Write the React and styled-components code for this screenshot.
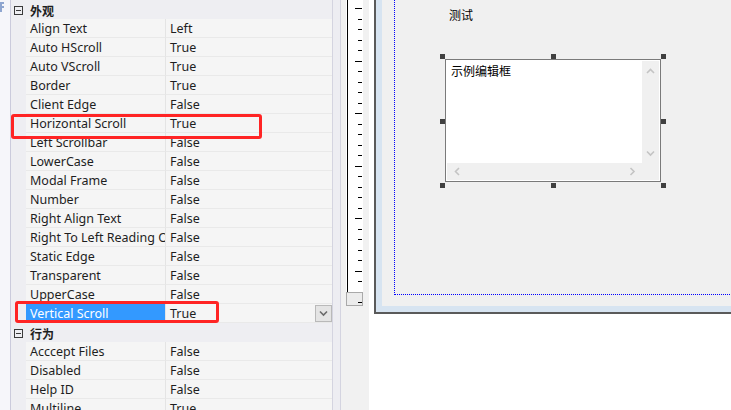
import React from 'react'
import styled, { createGlobalStyle } from 'styled-components'

const GlobalStyle = createGlobalStyle`
  html, body { margin: 0; padding: 0; background: #ffffff; }
  body { font-family: "Noto Sans", "Noto Sans CJK SC", sans-serif; }
`;

const sections = [
  {
    title: '外观',
    rows: [
      ['Align Text', 'Left'],
      ['Auto HScroll', 'True'],
      ['Auto VScroll', 'True'],
      ['Border', 'True'],
      ['Client Edge', 'False'],
      ['Horizontal Scroll', 'True'],
      ['Left Scrollbar', 'False'],
      ['LowerCase', 'False'],
      ['Modal Frame', 'False'],
      ['Number', 'False'],
      ['Right Align Text', 'False'],
      ['Right To Left Reading Order', 'False'],
      ['Static Edge', 'False'],
      ['Transparent', 'False'],
      ['UpperCase', 'False'],
      ['Vertical Scroll', 'True', true],
    ],
  },
  {
    title: '行为',
    rows: [
      ['Acccept Files', 'False'],
      ['Disabled', 'False'],
      ['Help ID', 'False'],
      ['Multiline', 'True'],
    ],
  },
];

// ruler ticks every ~10.5px, long one every 5th
const ticks = [];
for (let k = 0; 8 + k * 10.5 < 292; k++) {
  ticks.push({ y: Math.round(8 + k * 10.5) + 0.5, long: k % 5 === 0 });
}

const Chevron = ({ dir, color = '#c4c4c4' }) => {
  const pts = {
    up: '1,5 4.5,1.5 8,5',
    down: '1,1.5 4.5,5 8,1.5',
    left: '5,1 1.5,4.5 5,8',
    right: '1.5,1 5,4.5 1.5,8',
  }[dir];
  const vertical = dir === 'up' || dir === 'down';
  return (
    <svg width={vertical ? 9 : 7} height={vertical ? 7 : 9}>
      <polyline points={pts} fill="none" stroke={color} strokeWidth="1.6" />
    </svg>
  );
};

const App = () => {
  return (
    <Screen>
      <GlobalStyle />
      <PropertyPanel>
        <SideStrip>
          <svg width="4" height="13">
            <path d="M0 2 H4 V4 H2 V6 H4 V8 H2 V12 H0 Z" fill="#8fa6d0" />
          </svg>
        </SideStrip>
        <Grid>
          {sections.map((section) => (
            <React.Fragment key={section.title}>
              <HeaderRow>
                <ToggleBox />
                <HeaderTitle>{section.title}</HeaderTitle>
              </HeaderRow>
              {section.rows.map(([name, value, selected]) => (
                <Row key={name}>
                  <Gutter />
                  <NameCell selected={selected}>{name}</NameCell>
                  <ValueCell>
                    <span>{value}</span>
                    {selected && (
                      <DropButton>
                        <Chevron dir="down" color="#6a6a6a" />
                      </DropButton>
                    )}
                  </ValueCell>
                </Row>
              ))}
            </React.Fragment>
          ))}
        </Grid>
        <GridScroll />
        <Annotation style={{ left: 11, top: 114, width: 251, height: 25 }} />
        <Annotation style={{ left: 15, top: 301, width: 204, height: 22 }} />
      </PropertyPanel>

      <RulerColumn>
        <svg width="17" height="306">
          <rect x="0" y="0" width="17" height="292" fill="#ffffff" />
          <line x1="1.5" y1="0" x2="1.5" y2="292" stroke="#000" strokeWidth="1" />
          {ticks.map((t) => (
            <line key={t.y} x1={t.long ? 9 : 12} y1={t.y} x2="16" y2={t.y} stroke="#000" strokeWidth="1" />
          ))}
          <rect x="0.5" y="292.5" width="16" height="13" fill="#ececec" stroke="#a9a9a9" />
          <line x1="12" y1="302.5" x2="16" y2="302.5" stroke="#000" strokeWidth="1" />
        </svg>
      </RulerColumn>

      <Canvas>
        <Form>
          <Client>
            <Guide />
            <Label>测试</Label>
            <EditBox>
              <EditText>示例编辑框</EditText>
              <VScroll>
                <Chevron dir="up" />
                <Chevron dir="down" />
              </VScroll>
              <HScroll>
                <Chevron dir="left" />
                <Chevron dir="right" />
              </HScroll>
              <Corner />
            </EditBox>
            {[
              [58, 54], [169, 54], [279, 54],
              [58, 119], [279, 119],
              [58, 183], [169, 183], [279, 183],
            ].map(([x, y]) => (
              <Handle key={`${x}-${y}`} style={{ left: x, top: y }} />
            ))}
          </Client>
        </Form>
      </Canvas>
    </Screen>
  )
}

export default App

const Screen = styled.div`
  display: flex;
  width: 731px;
  height: 410px;
  overflow: hidden;
  background: #ffffff;
`;

const PropertyPanel = styled.div`
  position: relative;
  display: flex;
  flex-shrink: 0;
  height: 100%;
  background: #f5f5f5;
`;

const SideStrip = styled.div`
  width: 10px;
  flex-shrink: 0;
  background: #f6f6fa;
  border-right: 1px solid #cbcbdc;
  svg { display: block; }
`;

const Grid = styled.div`
  width: 321px;
  display: flex;
  flex-direction: column;
  background: #eeeef2;
  font-size: 12.5px;
  color: #1e1e1e;
`;

const HeaderRow = styled.div`
  display: flex;
  align-items: center;
  height: 19px;
  flex-shrink: 0;
  box-sizing: border-box;
  padding: 1px 0 0 3px;
  gap: 7px;
  background: #eeeef2;
`;

const ToggleBox = styled.span`
  position: relative;
  width: 9px;
  height: 9px;
  box-sizing: border-box;
  border: 1px solid #3a3a3a;
  margin-top: 1px;
  &::after {
    content: '';
    position: absolute;
    left: 1px;
    right: 1px;
    top: 3px;
    height: 1px;
    background: #3a3a3a;
  }
`;

const HeaderTitle = styled.span`
  font-family: "Noto Sans CJK SC", sans-serif;
  font-size: 12px;
  font-weight: 700;
  color: #1e1e1e;
`;

const Row = styled.div`
  display: grid;
  grid-template-columns: 15px 140px 1fr;
  height: 19px;
  flex-shrink: 0;
`;

const Gutter = styled.div`
  background: #eeeef2;
`;

const NameCell = styled.div`
  display: flex;
  align-items: center;
  padding: 1px 0 0 4px;
  white-space: nowrap;
  overflow: hidden;
  border-right: 1px solid #e4e4e4;
  border-bottom: 1px solid #e9e9e9;
  background: ${(p) => (p.selected ? '#3399ff' : '#f5f5f5')};
  color: ${(p) => (p.selected ? '#ffffff' : '#1e1e1e')};
`;

const ValueCell = styled.div`
  display: flex;
  align-items: center;
  padding: 1px 0 0 4px;
  border-bottom: 1px solid #e9e9e9;
  background: #f5f5f5;
  white-space: nowrap;
  overflow: hidden;
`;

const DropButton = styled.div`
  margin: -1px 0 0 auto;
  width: 17px;
  height: 17px;
  box-sizing: border-box;
  display: flex;
  align-items: center;
  justify-content: center;
  background: #e4e4e4;
  border: 1px solid #b9b9b9;
`;

const GridScroll = styled.div`
  width: 7px;
  flex-shrink: 0;
  background: #ededf2;
  border-left: 1px solid #d4d4e0;
  border-right: 1px solid #d4d4e0;
`;

const Annotation = styled.div`
  position: absolute;
  box-sizing: border-box;
  border: 3px solid #ff2424;
  border-radius: 3px;
  pointer-events: none;
`;

const RulerColumn = styled.div`
  width: 28px;
  flex-shrink: 0;
  padding-left: 5px;
  box-sizing: border-box;
  background: #f1f1f1;
  svg { display: block; }
`;

const Canvas = styled.div`
  flex: 1;
  padding-left: 5px;
  overflow: hidden;
  background: #ffffff;
`;

const Form = styled.div`
  width: 400px;
  height: 314px;
  box-sizing: border-box;
  border-left: 2px solid #5a5a5a;
  border-bottom: 2px solid #5a5a5a;
  padding: 0 0 6px 6px;
  background: #d7e4f1;
`;

const Client = styled.div`
  position: relative;
  height: 100%;
  box-sizing: border-box;
  padding: 0 0 12px 12px;
  background: #f0f0f0;
`;

const Guide = styled.div`
  height: 100%;
  border-left: 1px dotted #0000ff;
  border-bottom: 1px dotted #0000ff;
`;

const Label = styled.div`
  position: absolute;
  left: 67px;
  top: 7px;
  font-family: "Noto Sans CJK SC", sans-serif;
  font-size: 12px;
  line-height: 16px;
  color: #000000;
`;

const EditBox = styled.div`
  position: absolute;
  left: 63px;
  top: 59px;
  width: 216px;
  height: 123px;
  box-sizing: border-box;
  border: 1px solid #7a7a7a;
  padding: 1px;
  background: #ffffff;
  display: grid;
  grid-template-columns: 1fr 17px;
  grid-template-rows: 1fr 17px;
`;

const EditText = styled.div`
  padding: 3px 4px;
  font-family: "Noto Sans CJK SC", sans-serif;
  font-size: 12px;
  line-height: 14px;
  color: #000000;
`;

const VScroll = styled.div`
  background: #f0f0f0;
  display: flex;
  flex-direction: column;
  align-items: center;
  justify-content: space-between;
  padding: 7px 0 6px;
`;

const HScroll = styled.div`
  background: #f0f0f0;
  display: flex;
  align-items: center;
  justify-content: space-between;
  padding: 0 6px 0 7px;
`;

const Corner = styled.div`
  background: #f0f0f0;
`;

const Handle = styled.div`
  position: absolute;
  width: 5px;
  height: 5px;
  background: #404040;
`;
